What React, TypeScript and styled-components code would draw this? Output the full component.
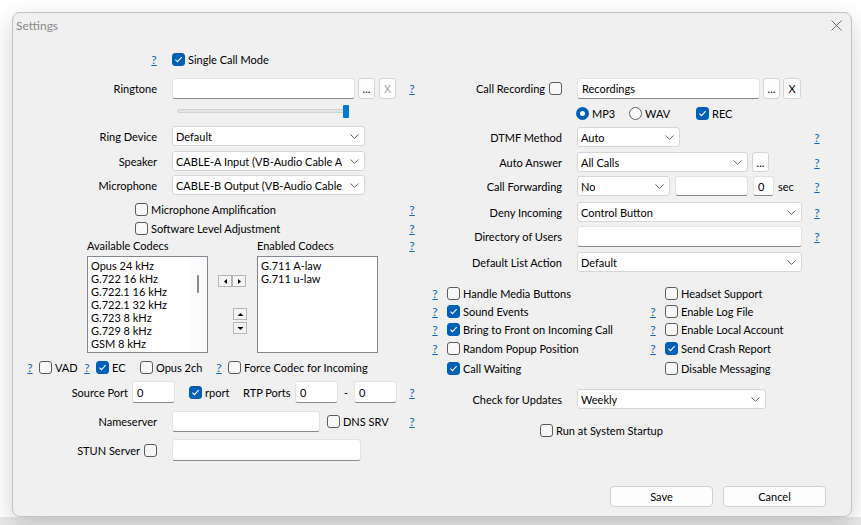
import React from 'react'
import styled, { createGlobalStyle } from 'styled-components'

const GlobalStyle = createGlobalStyle`
  html, body {
    margin: 0;
    padding: 0;
  }
  body {
    width: 861px;
    height: 525px;
    overflow: hidden;
    background: linear-gradient(to bottom, #ffffff 0, #ffffff 517px, #e9e9e9 517px);
    font-family: 'Lato', 'Liberation Sans', sans-serif;
    font-size: 11px;
    color: #000;
  }
`

const Desktop = styled.div`
  padding: 12px 0 0 12px;
`

const Dialog = styled.div`
  width: 840px;
  height: 505px;
  box-sizing: border-box;
  background: #f0f0f0;
  border: 1px solid #c2c2c2;
  border-radius: 8px;
  box-shadow: 0 8px 24px rgba(0, 0, 0, 0.18);
  display: flex;
  flex-direction: column;
`

const TitleBar = styled.div`
  height: 35px;
  flex: none;
  display: flex;
  justify-content: space-between;
  align-items: flex-start;
  padding: 6px 9px 0 3px;
  box-sizing: border-box;
`

const Title = styled.span`
  color: #8a8a8a;
  font-size: 12px;
  line-height: 14px;
`

const CloseIcon = styled.svg`
  margin-top: 1px;
`

const Body = styled.div`
  display: grid;
  grid-template-columns: 412px 1fr;
`

const Column = styled.div<{ $padTop?: number; $padRight: number }>`
  display: flex;
  flex-direction: column;
  padding-top: ${({ $padTop }) => $padTop ?? 0}px;
  padding-right: ${({ $padRight }) => $padRight}px;
`

const Row = styled.div<{ $h?: number; $top?: number; $indent?: number }>`
  display: flex;
  align-items: center;
  flex: none;
  height: ${({ $h }) => $h ?? 20}px;
  margin-top: ${({ $top }) => $top ?? 0}px;
  padding-left: ${({ $indent }) => $indent ?? 0}px;
  white-space: nowrap;
`

const LabelCell = styled.div<{ $w: number; $gap?: number }>`
  width: ${({ $w }) => $w}px;
  margin-right: ${({ $gap }) => $gap ?? 15}px;
  flex: none;
  display: flex;
  justify-content: flex-end;
  align-items: center;
  gap: 4px;
`

const Text = styled.span<{ $w?: number; $ml?: number; $center?: boolean }>`
  display: inline-block;
  ${({ $w }) => ($w ? `width: ${$w}px;` : '')}
  margin-left: ${({ $ml }) => $ml ?? 0}px;
  text-align: ${({ $center }) => ($center ? 'center' : 'left')};
  flex: none;
`

const Help = styled.span<{ $push?: boolean; $mr?: number }>`
  display: inline-block;
  width: 6px;
  flex: none;
  text-align: center;
  font-size: 12px;
  color: #0a64c8;
  text-decoration: underline;
  margin-left: ${({ $push }) => ($push ? 'auto' : '0')};
  margin-right: ${({ $mr }) => $mr ?? 0}px;
`

const TextBox = styled.div<{ $w: number; $ml?: number }>`
  width: ${({ $w }) => $w}px;
  height: 100%;
  margin-left: ${({ $ml }) => $ml ?? 0}px;
  flex: none;
  box-sizing: border-box;
  background: #ffffff;
  border: 1px solid #e3e3e3;
  border-bottom-color: #8a8a8a;
  border-radius: 3px;
  padding: 0 4px;
  display: flex;
  align-items: center;
`

const ComboBox = styled.div<{ $w: number }>`
  width: ${({ $w }) => $w}px;
  height: 20px;
  flex: none;
  box-sizing: border-box;
  background: #ffffff;
  border: 1px solid #d6d6d6;
  border-radius: 3px;
  padding: 0 5px 0 3px;
  display: flex;
  align-items: center;
  justify-content: space-between;
  gap: 4px;
`

const ComboValue = styled.span`
  min-width: 0;
  overflow: hidden;
`

const SmallButton = styled.div<{ $w: number; $ml?: number; $disabled?: boolean }>`
  width: ${({ $w }) => $w}px;
  height: 100%;
  margin-left: ${({ $ml }) => $ml ?? 3}px;
  flex: none;
  box-sizing: border-box;
  background: #fdfdfd;
  border: 1px solid #d4d4d4;
  border-radius: 3px;
  color: ${({ $disabled }) => ($disabled ? '#a6a6a6' : '#000')};
  display: flex;
  align-items: center;
  justify-content: center;
`

const Box = styled.span<{ $checked?: boolean }>`
  width: 13px;
  height: 13px;
  flex: none;
  box-sizing: border-box;
  border-radius: 3px;
  border: 1px solid ${({ $checked }) => ($checked ? '#005fb8' : '#5c5c5c')};
  background: ${({ $checked }) => ($checked ? '#005fb8' : '#f8f8f8')};
  display: flex;
  align-items: center;
  justify-content: center;
`

const RadioDot = styled.span<{ $checked?: boolean }>`
  width: 13px;
  height: 13px;
  flex: none;
  box-sizing: border-box;
  border-radius: 50%;
  background: #ffffff;
  border: ${({ $checked }) => ($checked ? '4px solid #005fb8' : '1px solid #5c5c5c')};
`

const Option = styled.label<{ $w?: number; $ml?: number }>`
  display: flex;
  align-items: center;
  gap: 3px;
  flex: none;
  ${({ $w }) => ($w ? `width: ${$w}px;` : '')}
  margin-left: ${({ $ml }) => $ml ?? 0}px;
`

const Slider = styled.div`
  position: relative;
  width: 172px;
  height: 13px;
  margin-left: 164px;
  display: flex;
  align-items: center;
`

const SliderTrack = styled.div`
  width: 100%;
  height: 4px;
  box-sizing: border-box;
  background: #e4e4e4;
  border: 1px solid #d2d2d2;
  border-radius: 2px;
`

const SliderThumb = styled.div`
  position: absolute;
  right: 0;
  top: 0;
  width: 6px;
  height: 13px;
  border-radius: 1px;
  background: #0078d4;
`

const CodecBlock = styled.div`
  display: grid;
  grid-template-columns: 121px 49px 121px 1fr;
  grid-template-rows: 14px 97px;
  row-gap: 3px;
  margin: 2px 0 0 74px;
  white-space: nowrap;
`

const ColHead = styled.span`
  line-height: 14px;
`

const HelpEnd = styled(Help)`
  justify-self: end;
  line-height: 14px;
`

const ListBox = styled.div`
  position: relative;
  box-sizing: border-box;
  background: #ffffff;
  border: 1px solid #828790;
  padding: 2px 0 0 3px;
  overflow: hidden;
`

const ListItem = styled.div`
  height: 13px;
  line-height: 13px;
`

const ScrollBar = styled.div`
  position: absolute;
  top: 0;
  right: 0;
  bottom: 0;
  width: 17px;
  background: #fbfbfb;
`

const ScrollThumb = styled.div`
  position: absolute;
  left: 7px;
  top: 18px;
  width: 2px;
  height: 18px;
  border-radius: 1px;
  background: #8a8a8a;
`

const Movers = styled.div`
  display: flex;
  flex-direction: column;
  align-items: flex-start;
  padding: 19px 0 0 10px;
`

const ArrowPair = styled.div`
  display: flex;
  margin-bottom: 21px;
`

const ArrowButton = styled.div<{ $ml?: number; $mb?: number }>`
  width: 14px;
  height: 12px;
  margin-left: ${({ $ml }) => $ml ?? 0}px;
  margin-bottom: ${({ $mb }) => $mb ?? 0}px;
  box-sizing: border-box;
  background: #f4f4f4;
  border: 1px solid #b5b5b5;
  display: flex;
  align-items: center;
  justify-content: center;
`

const OptionGrid = styled.div`
  display: grid;
  grid-template-columns: 218px 1fr;
  grid-template-rows: 18px 18px 19px 19px 20px;
  margin: 12px 0 0 7px;
  white-space: nowrap;
`

const OptionCell = styled.div`
  display: flex;
  align-items: center;
`

const HelpSlot = styled.span`
  width: 15px;
  flex: none;
  display: flex;
`

const Footer = styled.div`
  margin-top: auto;
  display: flex;
  justify-content: flex-end;
  gap: 10px;
  padding: 0 25px 9px 0;
`

const DialogButton = styled.div`
  width: 103px;
  height: 21px;
  box-sizing: border-box;
  background: #fdfdfd;
  border: 1px solid #d0d0d0;
  border-radius: 4px;
  display: flex;
  align-items: center;
  justify-content: center;
`

function Chevron() {
  return (
    <svg width="9" height="5" viewBox="0 0 9 5" style={{ flex: 'none' }}>
      <path d="M0.5 0.5 L4.5 4.3 L8.5 0.5" fill="none" stroke="#5f5f5f" strokeWidth="1" />
    </svg>
  )
}

function Check({ checked }: { checked?: boolean }) {
  return (
    <Box $checked={checked}>
      {checked && (
        <svg width="9" height="9" viewBox="0 0 9 9">
          <path d="M1.4 4.7 L3.5 6.7 L7.7 2.2" fill="none" stroke="#fff" strokeWidth="1.1" />
        </svg>
      )}
    </Box>
  )
}

function CheckOption({ label, checked, w, ml }: { label: string; checked?: boolean; w?: number; ml?: number }) {
  return (
    <Option $w={w} $ml={ml}>
      <Check checked={checked} />
      {label}
    </Option>
  )
}

function Combo({ w, value }: { w: number; value: string }) {
  return (
    <ComboBox $w={w}>
      <ComboValue>{value}</ComboValue>
      <Chevron />
    </ComboBox>
  )
}

function Triangle({ dir }: { dir: 'left' | 'right' | 'up' | 'down' }) {
  const d = {
    left: 'M4 1 L1 3.5 L4 6 Z',
    right: 'M1 1 L4 3.5 L1 6 Z',
    up: 'M0.5 4 L3.5 1 L6.5 4 Z',
    down: 'M0.5 1 L3.5 4 L6.5 1 Z',
  }[dir]
  const horizontal = dir === 'left' || dir === 'right'
  return (
    <svg width={horizontal ? 5 : 7} height={horizontal ? 7 : 5} viewBox={horizontal ? '0 0 5 7' : '0 0 7 5'}>
      <path d={d} fill="#000" />
    </svg>
  )
}

const availableCodecs = [
  'Opus 24 kHz',
  'G.722 16 kHz',
  'G.722.1 16 kHz',
  'G.722.1 32 kHz',
  'G.723 8 kHz',
  'G.729 8 kHz',
  'GSM 8 kHz',
]

const enabledCodecs = ['G.711 A-law', 'G.711 u-law']

const options: { help: boolean; label: string; checked?: boolean }[][] = [
  [{ help: true, label: 'Handle Media Buttons' }, { help: false, label: 'Headset Support' }],
  [{ help: true, label: 'Sound Events', checked: true }, { help: true, label: 'Enable Log File' }],
  [{ help: true, label: 'Bring to Front on Incoming Call', checked: true }, { help: true, label: 'Enable Local Account' }],
  [{ help: true, label: 'Random Popup Position' }, { help: true, label: 'Send Crash Report', checked: true }],
  [{ help: false, label: 'Call Waiting', checked: true }, { help: false, label: 'Disable Messaging' }],
]

export default function App() {
  return (
    <Desktop>
      <GlobalStyle />
      <Dialog>
        <TitleBar>
          <Title>Settings</Title>
          <CloseIcon width="11" height="11" viewBox="0 0 11 11">
            <path d="M0.5 0.5 L10.5 10.5 M10.5 0.5 L0.5 10.5" stroke="#6e6e6e" strokeWidth="1" />
          </CloseIcon>
        </TitleBar>

        <Body>
          <Column $padRight={10}>
            <Row $h={22}>
              <LabelCell $w={144}>
                <Help>?</Help>
              </LabelCell>
              <CheckOption label="Single Call Mode" checked />
            </Row>
            <Row $h={21} $top={8}>
              <LabelCell $w={144}>Ringtone</LabelCell>
              <TextBox $w={183} />
              <SmallButton $w={17}>...</SmallButton>
              <SmallButton $w={17} $ml={4} $disabled>
                X
              </SmallButton>
              <Help $push>?</Help>
            </Row>
            <Row $top={2}>
              <Slider>
                <SliderTrack />
                <SliderThumb />
              </Slider>
            </Row>
            <Row $top={5}>
              <LabelCell $w={144}>Ring Device</LabelCell>
              <Combo w={193} value="Default" />
            </Row>
            <Row $top={5}>
              <LabelCell $w={144}>Speaker</LabelCell>
              <Combo w={193} value="CABLE-A Input (VB-Audio Cable A" />
            </Row>
            <Row $top={4}>
              <LabelCell $w={144}>Microphone</LabelCell>
              <Combo w={193} value="CABLE-B Output (VB-Audio Cable" />
            </Row>
            <Row $h={18} $top={5} $indent={122}>
              <CheckOption label="Microphone Amplification" />
              <Help $push>?</Help>
            </Row>
            <Row $h={18} $top={1} $indent={122}>
              <CheckOption label="Software Level Adjustment" />
              <Help $push>?</Help>
            </Row>

            <CodecBlock>
              <ColHead>Available Codecs</ColHead>
              <span />
              <ColHead>Enabled Codecs</ColHead>
              <HelpEnd>?</HelpEnd>
              <ListBox>
                {availableCodecs.map((c) => (
                  <ListItem key={c}>{c}</ListItem>
                ))}
                <ScrollBar>
                  <ScrollThumb />
                </ScrollBar>
              </ListBox>
              <Movers>
                <ArrowPair>
                  <ArrowButton>
                    <Triangle dir="left" />
                  </ArrowButton>
                  <ArrowButton>
                    <Triangle dir="right" />
                  </ArrowButton>
                </ArrowPair>
                <ArrowButton $ml={15} $mb={2}>
                  <Triangle dir="up" />
                </ArrowButton>
                <ArrowButton $ml={15}>
                  <Triangle dir="down" />
                </ArrowButton>
              </Movers>
              <ListBox>
                {enabledCodecs.map((c) => (
                  <ListItem key={c}>{c}</ListItem>
                ))}
              </ListBox>
            </CodecBlock>

            <Row $h={18} $top={5} $indent={14}>
              <Help $mr={6}>?</Help>
              <CheckOption label="VAD" w={45} />
              <Help $mr={6}>?</Help>
              <CheckOption label="EC" checked w={44} />
              <CheckOption label="Opus 2ch" w={76} />
              <Help $mr={6}>?</Help>
              <CheckOption label="Force Codec for Incoming" />
            </Row>
            <Row $h={22} $top={5}>
              <LabelCell $w={115} $gap={4}>
                Source Port
              </LabelCell>
              <TextBox $w={43}>0</TextBox>
              <CheckOption label="rport" checked w={54} ml={14} />
              <Text $w={52}>RTP Ports</Text>
              <TextBox $w={43}>0</TextBox>
              <Text $w={16} $center>
                -
              </Text>
              <TextBox $w={43}>0</TextBox>
              <Help $push>?</Help>
            </Row>
            <Row $h={21} $top={8}>
              <LabelCell $w={144}>Nameserver</LabelCell>
              <TextBox $w={148} />
              <CheckOption label="DNS SRV" ml={7} />
              <Help $push>?</Help>
            </Row>
            <Row $h={22} $top={7}>
              <LabelCell $w={144}>
                STUN Server
                <Check />
              </LabelCell>
              <TextBox $w={189} />
            </Row>
          </Column>

          <Column $padTop={30} $padRight={31}>
            <Row $h={21}>
              <LabelCell $w={137}>
                Call Recording
                <Check />
              </LabelCell>
              <TextBox $w={183}>Recordings</TextBox>
              <SmallButton $w={17}>...</SmallButton>
              <SmallButton $w={18}>X</SmallButton>
            </Row>
            <Row $h={18} $top={5} $indent={151}>
              <Option $w={53}>
                <RadioDot $checked />
                MP3
              </Option>
              <Option $w={67}>
                <RadioDot />
                WAV
              </Option>
              <CheckOption label="REC" checked />
            </Row>
            <Row $top={5}>
              <LabelCell $w={137}>DTMF Method</LabelCell>
              <Combo w={103} value="Auto" />
              <Help $push>?</Help>
            </Row>
            <Row $top={5}>
              <LabelCell $w={137}>Auto Answer</LabelCell>
              <Combo w={171} value="All Calls" />
              <SmallButton $w={17} $ml={4}>
                ...
              </SmallButton>
              <Help $push>?</Help>
            </Row>
            <Row $top={4}>
              <LabelCell $w={137}>Call Forwarding</LabelCell>
              <Combo w={93} value="No" />
              <TextBox $w={73} $ml={5} />
              <TextBox $w={21} $ml={5}>
                0
              </TextBox>
              <Text $ml={4}>sec</Text>
              <Help $push>?</Help>
            </Row>
            <Row $top={6}>
              <LabelCell $w={137}>Deny Incoming</LabelCell>
              <Combo w={225} value="Control Button" />
              <Help $push>?</Help>
            </Row>
            <Row $h={21} $top={4}>
              <LabelCell $w={137}>Directory of Users</LabelCell>
              <TextBox $w={225} />
              <Help $push>?</Help>
            </Row>
            <Row $top={5}>
              <LabelCell $w={137}>Default List Action</LabelCell>
              <Combo w={225} value="Default" />
            </Row>

            <OptionGrid>
              {options.flat().map((o) => (
                <OptionCell key={o.label}>
                  <HelpSlot>{o.help && <Help>?</Help>}</HelpSlot>
                  <CheckOption label={o.label} checked={o.checked} />
                </OptionCell>
              ))}
            </OptionGrid>

            <Row $top={11}>
              <LabelCell $w={137}>Check for Updates</LabelCell>
              <Combo w={189} value="Weekly" />
            </Row>
            <Row $h={18} $top={12} $indent={115}>
              <CheckOption label="Run at System Startup" />
            </Row>
          </Column>
        </Body>

        <Footer>
          <DialogButton>Save</DialogButton>
          <DialogButton>Cancel</DialogButton>
        </Footer>
      </Dialog>
    </Desktop>
  )
}
